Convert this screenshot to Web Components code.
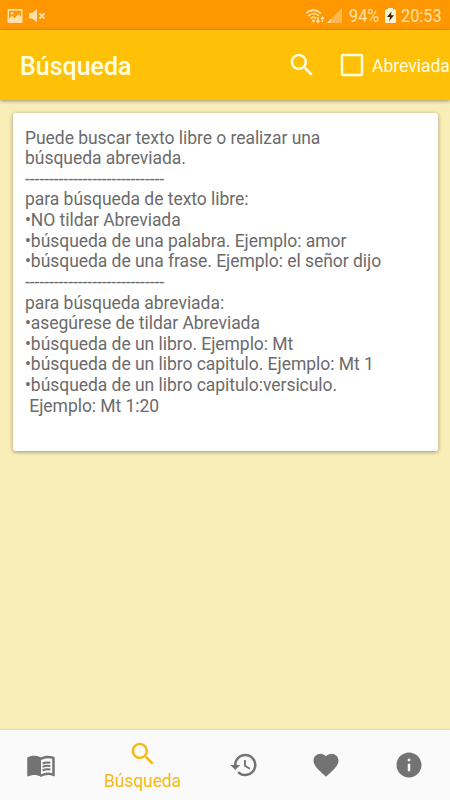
<!DOCTYPE html>
<html lang="es">
<head>
<meta charset="utf-8">
<meta name="viewport" content="width=device-width, initial-scale=1">
<title>Búsqueda</title>
<style>
  body {
    margin: 0;
    background: #faeeb8;
    font-family: Roboto, "Liberation Sans", sans-serif;
    overflow: hidden;
  }
</style>
</head>
<body>
<search-app></search-app>

<script>
const ICONS = {
  search: `<path d="M15.5 14h-.79l-.28-.27C15.41 12.59 16 11.11 16 9.5 16 5.91 13.09 3 9.5 3S3 5.91 3 9.5 5.91 16 9.5 16c1.61 0 3.09-.59 4.23-1.57l.27.28v.79l5 4.99L20.49 19l-4.99-5zm-6 0C7.01 14 5 11.99 5 9.5S7.01 5 9.5 5 14 7.01 14 9.5 11.99 14 9.5 14z"/>`,
  checkbox: `<path d="M19 5v14H5V5h14m0-2H5c-1.1 0-2 .9-2 2v14c0 1.1.9 2 2 2h14c1.1 0 2-.9 2-2V5c0-1.1-.9-2-2-2z"/>`,
  book: `<path d="M21 5c-1.11-.35-2.33-.5-3.5-.5-1.95 0-4.05.4-5.5 1.5-1.45-1.1-3.55-1.5-5.5-1.5S2.45 4.9 1 6v14.65c0 .25.25.5.5.5.1 0 .15-.05.25-.05C3.1 20.45 5.05 20 6.5 20c1.95 0 4.05.4 5.5 1.5 1.35-.85 3.8-1.5 5.5-1.5 1.65 0 3.35.3 4.75 1.05.1.05.15.05.25.05.25 0 .5-.25.5-.5V6c-.6-.45-1.25-.75-2-1zm0 13.5c-1.1-.35-2.3-.5-3.5-.5-1.7 0-4.15.65-5.5 1.5V8c1.35-.85 3.8-1.5 5.5-1.5 1.2 0 2.4.15 3.5.5v11.5z"/>
    <path d="M13.3 10.8c1.8-.8 4.1-1 6.2-.6M13.3 13.5c1.8-.8 4.1-1 6.2-.6M13.3 16.2c1.8-.8 4.1-1 6.2-.6" fill="none" stroke="currentColor" stroke-width="1.6"/>`,
  history: `<path d="M13 3c-4.97 0-9 4.03-9 9H1l3.89 3.89.07.14L9 12H6c0-3.87 3.13-7 7-7s7 3.13 7 7-3.13 7-7 7c-1.93 0-3.68-.79-4.94-2.06l-1.42 1.42C8.27 19.99 10.51 21 13 21c4.97 0 9-4.03 9-9s-4.03-9-9-9zm-1 5v5l4.28 2.54.72-1.21-3.5-2.08V8H12z"/>`,
  heart: `<path d="M12 21.35l-1.45-1.32C5.4 15.36 2 12.28 2 8.5 2 5.42 4.42 3 7.5 3c1.74 0 3.41.81 4.5 2.09C13.09 3.81 14.76 3 16.5 3 19.58 3 22 5.42 22 8.5c0 3.78-3.4 6.86-8.55 11.54L12 21.35z"/>`,
  info: `<path d="M12 2C6.48 2 2 6.48 2 12s4.48 10 10 10 10-4.48 10-10S17.52 2 12 2zm1 15h-2v-6h2v6zm0-8h-2V7h2v2z"/>`,
};

class MdIcon extends HTMLElement {
  constructor() {
    super();
    this.attachShadow({ mode: "open" });
  }

  connectedCallback() {
    this.shadowRoot.innerHTML = /*html*/ `
      <style>
        :host { display: block; flex: none; width: 30px; height: 30px; }
        svg { display: block; fill: currentColor; }
      </style>
      <svg width="30" height="30" viewBox="0 0 24 24">${ICONS[this.getAttribute("name")]}</svg>
    `;
  }
}

class StatusBar extends HTMLElement {
  constructor() {
    super();
    this.attachShadow({ mode: "open" });
  }

  connectedCallback() {
    this.shadowRoot.innerHTML = /*html*/ `
      <style>
        :host {
          display: flex;
          align-items: center;
          height: 30px;
          box-sizing: border-box;
          padding: 1px 9px 0 7px;
          background: #ff9800;
          color: #ffe0a8;
        }
        svg { display: block; flex: none; fill: currentColor; }
        /* narrow digits: the margin gives back the width lost to the scale */
        span {
          flex: none;
          font-size: 19px;
          line-height: 24px;
          transform: scaleX(.86);
          transform-origin: left;
        }
        .mute { margin-left: 6px; }
        .wifi { margin-left: auto; }
        .signal { margin-left: 2px; }
        .level { margin: 0 -5px 0 6px; }
        .battery { margin-left: 5px; }
        .clock { margin: 0 -7px 0 5px; }
      </style>
      <svg width="16" height="14" viewBox="0 0 16 14">
        <path fill-rule="evenodd" d="M1.5 0h13q1 0 1 1v12q0 1-1 1h-13q-1 0-1-1V1q0-1 1-1zM2 1.7v8.1l3-3 2.500 2.400L11.500 5 14 7.500V1.700z"/>
        <circle cx="5" cy="4.2" r="1.3"/>
      </svg>
      <svg class="mute" width="17" height="14" viewBox="0 0 17 14">
        <path d="M0 4h3l5-4v13L3 9.5H0z"/>
        <path d="M10.5 4.5l5 5m0-5l-5 5" fill="none" stroke="currentColor" stroke-width="1.8"/>
      </svg>
      <svg class="wifi" width="20" height="16" viewBox="0 0 20 16">
        <g fill="none" stroke="currentColor" stroke-width="1.6">
          <path d="M1 5.3q7-6.5 15 0M3.2 8q5.3-5 10.8 0M5.6 10.5q3-2.6 5.8 0"/>
        </g>
        <circle cx="8.5" cy="13" r="1.4"/>
        <path d="M12.3 9h1.4v3.5h1.6L13 15.5l-2.3-3h1.6zM16.8 14h1.4v-3h1.6l-2.3-3-2.3 3h1.6z"/>
      </svg>
      <svg class="signal" width="16" height="15" viewBox="0 0 16 15">
        <path d="M15 0v15H0z" opacity=".45"/>
        <path d="M4 11v4H0z"/>
      </svg>
      <span class="level">94%</span>
      <svg class="battery" width="11" height="15" viewBox="0 0 11 15">
        <path d="M3 0h5v1.5h2q1 0 1 1V14q0 1-1 1H1q-1 0-1-1V2.5q0-1 1-1h2z" fill="#fff3d6"/>
        <path d="M6.5 3.5L2 9h3l-.8 4L9 7.2H6z" fill="#3b2500"/>
      </svg>
      <span class="clock">20:53</span>
    `;
  }
}

class AppBar extends HTMLElement {
  constructor() {
    super();
    this.attachShadow({ mode: "open" });
  }

  connectedCallback() {
    this.shadowRoot.innerHTML = /*html*/ `
      <style>
        :host {
          display: flex;
          align-items: center;
          height: 70px;
          box-sizing: border-box;
          padding-left: 20px;
          background: #ffc107;
          color: #fffde0;
          box-shadow: 0 1px 4px rgba(0, 0, 0, .4);
          white-space: nowrap;
        }
        h1 { flex: 1; margin: 0; font-size: 25px; font-weight: 500; line-height: 30px; padding-top: 4px; }
        label { display: flex; align-items: center; gap: 5px; width: 113px; margin-left: 20px; font-size: 17.5px; }
        .option { padding-top: 2px; }
      </style>
      <h1><slot></slot></h1>
      <md-icon name="search"></md-icon>
      <label><md-icon name="checkbox"></md-icon><span class="option"><slot name="option"></slot></span></label>
    `;
  }
}

class HelpCard extends HTMLElement {
  constructor() {
    super();
    this.attachShadow({ mode: "open" });
  }

  connectedCallback() {
    this.shadowRoot.innerHTML = /*html*/ `
      <style>
        :host {
          display: block;
          box-sizing: border-box;
          height: 338px;
          margin: 12.5px 12.5px 0;
          padding: 15px 12.5px;
          border-radius: 2.5px;
          background: #fff;
          color: #6b6b6b;
          font-size: 17.5px;
          letter-spacing: -.04px;
          line-height: 20.62px;
          box-shadow: 0 1px 4px rgba(0, 0, 0, .38);
        }
        div { white-space: pre; }
      </style>
      <div><slot></slot></div>
    `;
  }
}

class NavItem extends HTMLElement {
  constructor() {
    super();
    this.attachShadow({ mode: "open" });
  }

  connectedCallback() {
    this.shadowRoot.innerHTML = /*html*/ `
      <style>
        :host {
          display: flex;
          flex-direction: column;
          align-items: center;
          justify-content: center;
          width: 82.5px;
          color: #737373;
          font-size: 17.5px;
          letter-spacing: -.1px;
          line-height: 24px;
        }
        :host([active]) { width: 120px; color: #f3bb13; padding-top: 2px; }
      </style>
      <md-icon name="${this.getAttribute("icon")}"></md-icon>
      <slot></slot>
    `;
  }
}

class BottomNav extends HTMLElement {
  constructor() {
    super();
    this.attachShadow({ mode: "open" });
  }

  connectedCallback() {
    this.shadowRoot.innerHTML = /*html*/ `
      <style>
        :host {
          display: flex;
          height: 70px;
          background: #fafafa;
          box-shadow: 0 0 3px rgba(0, 0, 0, .2);
        }
      </style>
      <slot></slot>
    `;
  }
}

class SearchApp extends HTMLElement {
  constructor() {
    super();
    this.attachShadow({ mode: "open" });
  }

  connectedCallback() {
    const help = [
      "Puede buscar texto libre o realizar una",
      "búsqueda abreviada.",
      "-----------------------------",
      "para búsqueda de texto libre:",
      "•NO tildar Abreviada",
      "•búsqueda de una palabra. Ejemplo: amor",
      "•búsqueda de una frase. Ejemplo: el señor dijo",
      "-----------------------------",
      "para búsqueda abreviada:",
      "•asegúrese de tildar Abreviada",
      "•búsqueda de un libro. Ejemplo: Mt",
      "•búsqueda de un libro capitulo. Ejemplo: Mt 1",
      "•búsqueda de un libro capitulo:versiculo.",
      " Ejemplo: Mt 1:20",
    ].join("\n");

    this.shadowRoot.innerHTML = /*html*/ `
      <style>
        :host { display: flex; flex-direction: column; height: 100vh; overflow: hidden; }
        main { flex: 1; }
        bottom-nav, status-bar, app-bar { flex-shrink: 0; }
      </style>
      <status-bar></status-bar>
      <app-bar>Búsqueda<span slot="option">Abreviada</span></app-bar>
      <main><help-card>${help}</help-card></main>
      <bottom-nav>
        <nav-item icon="book"></nav-item>
        <nav-item icon="search" active>Búsqueda</nav-item>
        <nav-item icon="history"></nav-item>
        <nav-item icon="heart"></nav-item>
        <nav-item icon="info"></nav-item>
      </bottom-nav>
    `;
  }
}

customElements.define("md-icon", MdIcon);
customElements.define("status-bar", StatusBar);
customElements.define("app-bar", AppBar);
customElements.define("help-card", HelpCard);
customElements.define("nav-item", NavItem);
customElements.define("bottom-nav", BottomNav);
customElements.define("search-app", SearchApp);
</script>
</body>
</html>
